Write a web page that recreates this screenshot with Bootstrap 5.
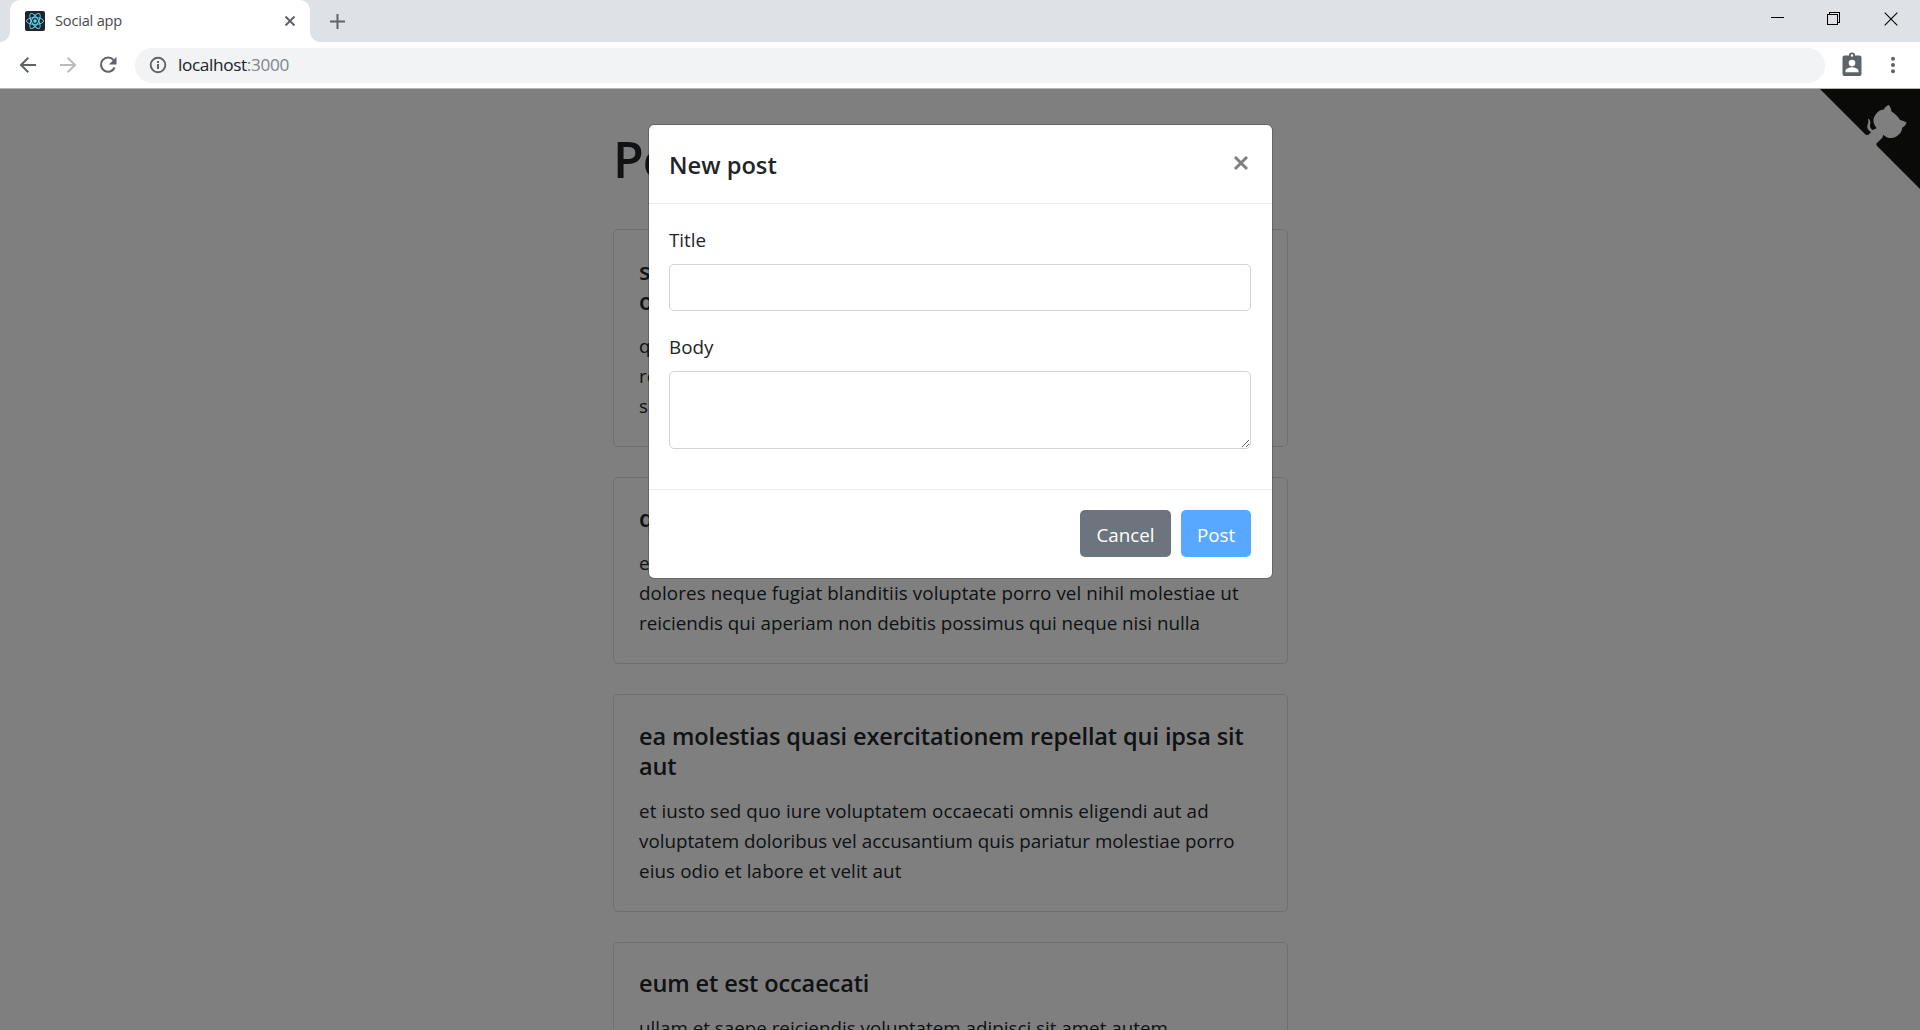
<!DOCTYPE html>
<html lang="en">
<head>
<meta charset="utf-8">
<meta name="viewport" content="width=device-width, initial-scale=1">
<title>Social app</title>
<link href="https://cdn.jsdelivr.net/npm/bootstrap@5.3.0/dist/css/bootstrap.min.css" rel="stylesheet">
<style>
  html { font-size: 20px; }
  body { font-family: "Open Sans", "Noto Sans", sans-serif; font-size: 18.8px; line-height: 30px; color: #212529; }
  svg { display: block; flex: none; }

  /* Browser frame */
  .tab-strip { height: 42px; background: #dee1e6; padding-left: 10px; }
  .browser-tab { position: relative; width: 300px; background: #fff; border-radius: 10px 10px 0 0; padding: 0 15px; gap: 10px; font-size: 14.6px; line-height: 28px; color: #45494d; letter-spacing: -.2px; }
  .browser-tab::before, .browser-tab::after { content: ""; position: absolute; bottom: 0; width: 10px; height: 10px; }
  .browser-tab::before { left: -10px; background: radial-gradient(circle at 0 0, transparent 9.5px, #fff 10px); }
  .browser-tab::after { right: -10px; background: radial-gradient(circle at 100% 0, transparent 9.5px, #fff 10px); }
  .browser-tab .tab-label { padding-bottom: 2px; }
  .new-tab { padding-left: 20px; }
  .window-buttons { gap: 43px; padding: 0 22px 5px 0; }
  .window-buttons .close-icon { margin-left: 1px; }
  .toolbar { height: 46px; padding: 0 22px 0 19px; }
  .nav-icons { gap: 22px; }
  .address-bar { height: 35px; background: #f1f3f4; border-radius: 18px; padding-left: 14px; margin-left: 18px; gap: 11px; font-size: 17.2px; letter-spacing: -.35px; color: #202124; }
  .address-bar .port { color: #80868b; }
  .toolbar-end { gap: 24px; margin-left: 15px; }
  .page-view { border-top: 1px solid #b6b6b6; }

  /* Page */
  .feed { width: 694px; padding-right: 19px; margin-left: 613px; padding-top: 40px; }
  .feed h1 { font-size: 50px; line-height: 60px; font-weight: 600; margin-bottom: 40px; letter-spacing: -1px; }
  .post { border-color: #dfdfdf; border-radius: 5px; margin-bottom: 30px; }
  .post .card-body { padding: 25.5px 0 25.1px 25px; white-space: nowrap; }
  .post-title { font-size: 23.5px; line-height: 30px; font-weight: 600; margin-bottom: 15px; letter-spacing: -.1px; }
  .post .wide-line { letter-spacing: .1px; }
  .github-corner { position: absolute; top: 0; right: 0; }
  .shade { position: absolute; inset: 0; background: rgba(0,0,0,.5); }

  /* Dialog */
  .new-post { position: absolute; top: 35px; left: 648px; width: 625px; }
  .new-post .modal-content { background: #fff; border: 1px solid rgba(0,0,0,.2); border-radius: 6px; background-clip: padding-box; color: #212529; }
  .new-post .modal-header { height: 79px; padding: 20px 21px 20px 20px; border-bottom: 1px solid #e9ecef; }
  .new-post .modal-title { font-size: 23.7px; line-height: 37px; font-weight: 600; padding-top: 2px; }
  .new-post .modal-body { padding: 20px 21px 20px 20px; }
  .new-post .form-group { margin-bottom: 20px; }
  .new-post .modal-footer { padding: 20px 21px 21px 20px; gap: 10px; border-top: 1px solid #e9ecef; }
  .new-post .modal-footer .btn { margin: 0; padding: 9px 0 6px; font-size: 18.8px; line-height: 30px; border-radius: 5px; }
  .new-post .form-label { display: block; padding-top: 1px; margin-bottom: 9px; }
  .new-post .form-control { background: #fff; border: 1px solid #ced4da; border-radius: 5px; height: 47px; }
  .new-post textarea.form-control { height: 78px; }
  .new-post .btn-cancel { width: 91px; background: #6c757d; color: #fff; }
  .new-post .btn-post { width: 70px; background: #007bff; color: #fff; opacity: .65; border-color: transparent; }
</style>
<script src="https://cdn.jsdelivr.net/npm/bootstrap@5.3.0/dist/js/bootstrap.bundle.min.js"></script>
</head>
<body class="vh-100 overflow-hidden d-flex flex-column">

<header class="flex-shrink-0 bg-white">
  <div class="tab-strip d-flex">
    <div class="browser-tab d-flex align-items-center">
      <svg width="20" height="20" viewBox="0 0 20 20"><rect width="20" height="20" rx="2" fill="#20232a"/><g fill="none" stroke="#61dafb" stroke-width=".9"><ellipse cx="10" cy="10" rx="8.6" ry="3.4"/><ellipse cx="10" cy="10" rx="8.6" ry="3.4" transform="rotate(60 10 10)"/><ellipse cx="10" cy="10" rx="8.6" ry="3.4" transform="rotate(120 10 10)"/></g><circle cx="10" cy="10" r="1.7" fill="#61dafb"/></svg>
      <span class="tab-label flex-grow-1">Social app</span>
      <svg width="10" height="10" viewBox="0 0 10 10" stroke="#5f6368" stroke-width="2"><path d="M.5.5l9 9M9.500.5l-9 9"/></svg>
    </div>
    <div class="new-tab d-flex align-items-center">
      <svg width="15" height="15" viewBox="0 0 15 15" stroke="#5f6368" stroke-width="2"><path d="M7.500 0v15M0 7.500h15"/></svg>
    </div>
    <div class="window-buttons d-flex align-items-center ms-auto">
      <svg width="13" height="13" viewBox="0 0 13 13" shape-rendering="crispEdges"><path d="M0 5.500h13" stroke="#000"/></svg>
      <svg width="13" height="13" viewBox="0 0 13 13" fill="none" stroke="#000" shape-rendering="crispEdges"><path d="M.5 2.500h10v10h-10zM2.500 2.500v-2h10v10h-2"/></svg>
      <svg class="close-icon" width="14" height="14" viewBox="0 0 14 14" stroke="#000" stroke-width="1.1"><path d="M.7.7l12.600 12.600M13.300.7L.7 13.300"/></svg>
    </div>
  </div>
  <div class="toolbar d-flex align-items-center">
    <div class="nav-icons d-flex align-items-center">
      <svg width="18" height="18" viewBox="0 0 18 18" fill="none" stroke="#5f6368" stroke-width="2"><path d="M17 9H2.500M9.300 1.700L2 9l7.300 7.300"/></svg>
      <svg width="18" height="18" viewBox="0 0 18 18" fill="none" stroke="#babcbe" stroke-width="2"><path d="M1 9h14.500M8.700 1.700L16 9l-7.300 7.300"/></svg>
      <svg width="18" height="18" viewBox="0 0 18 18"><path d="M14.600 4.100A7.100 7.100 0 1 0 15.600 11.500" fill="none" stroke="#5f6368" stroke-width="2.100"/><path d="M17.500 .8v7.600H9.900z" fill="#5f6368"/></svg>
    </div>
    <div class="address-bar d-flex align-items-center flex-grow-1">
      <svg width="18" height="18" viewBox="0 0 18 18"><circle cx="9" cy="9" r="7.300" fill="none" stroke="#5f6368" stroke-width="1.900"/><path d="M8 8h2v5H8zM8 4.900h2v2H8z" fill="#5f6368"/></svg>
      <span>localhost<span class="port">:3000</span></span>
    </div>
    <div class="toolbar-end d-flex align-items-center">
      <svg width="24" height="26" viewBox="0 1 24 26"><path fill="#5f6368" fill-rule="evenodd" d="M4.500 4.500H9a3.100 3.100 0 0 1 6 0H19.500a2 2 0 0 1 2 2V23a2 2 0 0 1-2 2H4.500a2 2 0 0 1-2-2V6.500a2 2 0 0 1 2-2zM12 3.200a1.300 1.300 0 1 0 0 2.600 1.300 1.300 0 0 0 0-2.600zM12 8.800a3.300 3.300 0 1 0 0 6.600 3.300 3.300 0 0 0 0-6.600zM5.500 21.300h13v-1.300c0-2.400-4.300-3.700-6.500-3.700s-6.500 1.300-6.500 3.700z"/><circle cx="12" cy="4.500" r="2.400" fill="none" stroke="#5f6368" stroke-width="1.300"/></svg>
      <svg width="10" height="18" viewBox="0 0 10 18" fill="#5f6368"><circle cx="5" cy="2.800" r="2"/><circle cx="5" cy="9" r="2"/><circle cx="5" cy="15.200" r="2"/></svg>
    </div>
  </div>
</header>

<div class="page-view position-relative flex-grow-1 overflow-hidden">
  <main class="feed">
    <h1>Po</h1>
    <article class="card post"><div class="card-body">
      <h5 class="post-title">s<br>o</h5>
      <p class="mb-0">q<br>re<br>su</p>
    </div></article>
    <article class="card post"><div class="card-body">
      <h5 class="post-title">q</h5>
      <p class="mb-0">e<br><span class="wide-line">dolores neque fugiat blanditiis voluptate porro vel nihil molestiae ut</span><br>reiciendis qui aperiam non debitis possimus qui neque nisi nulla</p>
    </div></article>
    <article class="card post"><div class="card-body">
      <h5 class="post-title">ea molestias quasi exercitationem repellat qui ipsa sit<br>aut</h5>
      <p class="mb-0"><span class="wide-line">et iusto sed quo iure voluptatem occaecati omnis eligendi aut ad</span><br>voluptatem doloribus vel accusantium quis pariatur molestiae porro<br><span class="wide-line">eius odio et labore et velit aut</span></p>
    </div></article>
    <article class="card post"><div class="card-body">
      <h5 class="post-title">eum et est occaecati</h5>
      <p class="mb-0">ullam et saepe reiciendis voluptatem adipisci sit amet autem</p>
    </div></article>
  </main>

  <svg class="github-corner" width="100" height="100" viewBox="0 0 250 250"><path fill="#151513" d="M0,0 L115,115 L130,115 L142,142 L250,250 L250,0 Z"/><path fill="#fff" d="M128.3,109.0 C113.8,99.7 119.0,89.6 119.0,89.6 C122.0,82.7 120.5,78.6 120.5,78.6 C119.2,72.0 123.4,76.3 123.4,76.3 C127.3,80.9 125.5,87.3 125.5,87.3 C122.9,97.6 130.6,101.9 134.4,103.2"/><path fill="#fff" d="M115.0,115.0 C114.9,115.1 118.7,116.5 119.8,115.4 L133.7,101.6 C136.9,99.2 139.9,98.4 142.2,98.6 C133.8,88.0 127.5,74.4 143.8,58.0 C148.5,53.4 154.0,51.2 159.7,51.0 C160.3,49.4 163.2,43.6 171.4,40.1 C171.4,40.1 176.1,42.5 178.8,56.2 C183.1,58.6 187.2,61.8 190.9,65.4 C194.5,69.0 197.7,73.2 200.1,77.6 C213.8,80.2 216.3,84.9 216.3,84.9 C212.7,93.1 206.9,96.0 205.4,96.6 C205.1,102.4 203.0,107.8 198.3,112.5 C181.9,128.9 168.3,122.5 157.7,114.1 C157.9,116.9 156.7,120.9 152.7,124.9 L141.0,136.5 C139.8,137.7 141.6,141.9 141.8,141.8 Z"/></svg>

  <div class="shade"></div>

  <div class="new-post" role="dialog" aria-labelledby="dialog-title">
    <form class="modal-content">
      <div class="modal-header d-flex align-items-center justify-content-between">
        <h4 class="modal-title" id="dialog-title">New post</h4>
        <svg width="18" height="16" viewBox="0 0 18 16" stroke="#7f7f7f" stroke-width="2.900"><path d="M2 1l12 12M14 1L2 13"/></svg>
      </div>
      <div class="modal-body">
        <div class="form-group">
          <label class="form-label" for="post-name">Title</label>
          <input class="form-control" id="post-name" type="text">
        </div>
        <div class="form-group">
          <label class="form-label" for="post-text">Body</label>
          <textarea class="form-control" id="post-text"></textarea>
        </div>
      </div>
      <div class="modal-footer">
        <button class="btn btn-cancel" type="button">Cancel</button>
        <button class="btn btn-post" type="button" disabled>Post</button>
      </div>
    </form>
  </div>
</div>
</body>
</html>
